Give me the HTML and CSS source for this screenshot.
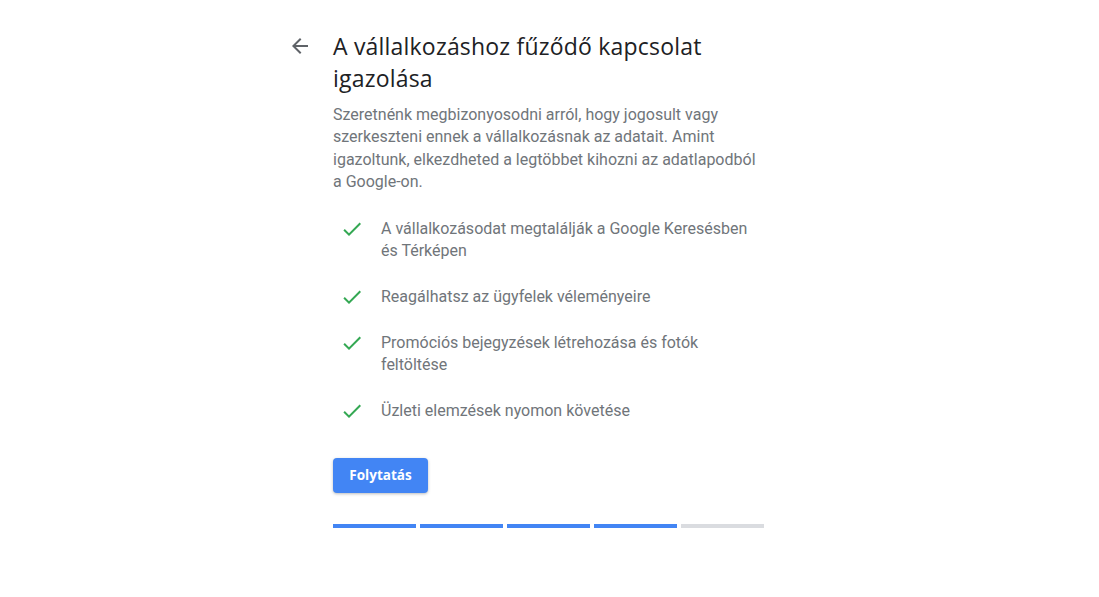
FILE: index.html
```html
<!DOCTYPE html>
<html lang="hu">
<head>
  <meta charset="UTF-8" />
  <title>A vállalkozáshoz fűződő kapcsolat igazolása</title>
  <link rel="stylesheet" href="styles.css">
</head>
<body>

<div class="page">
  <div class="back">
    <svg viewBox="0 0 24 24" width="24" height="24"><path fill="#5f6368" d="M20 11H7.83l5.59-5.59L12 4l-8 8 8 8 1.41-1.41L7.83 13H20v-2z"/></svg>
  </div>

  <div class="content">
    <h1 class="title">A vállalkozáshoz fűződő kapcsolat igazolása</h1>

    <p class="intro">Szeretnénk megbizonyosodni arról, hogy jogosult vagy szerkeszteni ennek a vállalkozásnak az adatait. Amint igazoltunk, elkezdheted a legtöbbet kihozni az adatlapodból a Google-on.</p>

    <ul class="perks">
      <li>
        <svg class="check" viewBox="0 0 24 24" width="24" height="24"><path d="M9 16.2L4.8 12l-1.4 1.4L9 19 21 7l-1.4-1.4L9 16.2z"/></svg>
        <span>A vállalkozásodat megtalálják a Google Keresésben és Térképen</span>
      </li>
      <li>
        <svg class="check" viewBox="0 0 24 24" width="24" height="24"><path d="M9 16.2L4.8 12l-1.4 1.4L9 19 21 7l-1.4-1.4L9 16.2z"/></svg>
        <span>Reagálhatsz az ügyfelek véleményeire</span>
      </li>
      <li>
        <svg class="check" viewBox="0 0 24 24" width="24" height="24"><path d="M9 16.2L4.8 12l-1.4 1.4L9 19 21 7l-1.4-1.4L9 16.2z"/></svg>
        <span>Promóciós bejegyzések létrehozása és fotók feltöltése</span>
      </li>
      <li>
        <svg class="check" viewBox="0 0 24 24" width="24" height="24"><path d="M9 16.2L4.8 12l-1.4 1.4L9 19 21 7l-1.4-1.4L9 16.2z"/></svg>
        <span>Üzleti elemzések nyomon követése</span>
      </li>
    </ul>

    <button class="next">Folytatás</button>

    <div class="progress">
      <div class="step done"></div>
      <div class="step done"></div>
      <div class="step done"></div>
      <div class="step done"></div>
      <div class="step"></div>
    </div>
  </div>
</div>

</body>
</html>
```

FILE: styles.css
```css
body {
  margin: 0;
  background: #fff;
  font-family: Roboto, Arial, sans-serif;
}
.page {
  display: flex;
  gap: 21px;
  padding: 30px 0 0 288px;
}
.back {
  width: 24px;
  height: 32px;
  display: flex;
  align-items: center;
  cursor: pointer;
}
.back svg {
  display: block;
}
.content {
  width: 431px;
}
.title {
  margin: 0;
  font-family: "Open Sans", Roboto, sans-serif;
  font-weight: 400;
  font-size: 23px;
  line-height: 32px;
  color: #202124;
  letter-spacing: 0.2px;
}
.intro {
  margin: 10px 0 0;
  font-size: 16px;
  line-height: 22.4px;
  color: #70757a;
}
.perks {
  list-style: none;
  margin: 24px 0 0;
  padding: 0;
}
.perks li {
  display: flex;
  align-items: flex-start;
  gap: 17px;
  padding-left: 7px;
  font-size: 16px;
  line-height: 22px;
  color: #70757a;
  margin-bottom: 24px;
}
.perks li:last-child {
  margin-bottom: 0;
}
.check {
  flex: none;
  fill: #34a853;
  margin: -1px 0;
}
.next {
  margin-top: 36px;
  height: 35px;
  width: 95px;
  padding: 0;
  border: none;
  border-radius: 4px;
  background: #4285f4;
  color: #fff;
  font-family: "Open Sans", Roboto, sans-serif;
  font-weight: 700;
  font-size: 13.5px;
  box-shadow: 0 1px 3px rgba(60, 64, 67, 0.35);
  cursor: pointer;
  display: block;
}
.progress {
  display: flex;
  gap: 4px;
  margin-top: 31px;
}
.step {
  flex: 1;
  height: 4px;
  background: #dadce0;
}
.step.done {
  background: #4285f4;
}
```
